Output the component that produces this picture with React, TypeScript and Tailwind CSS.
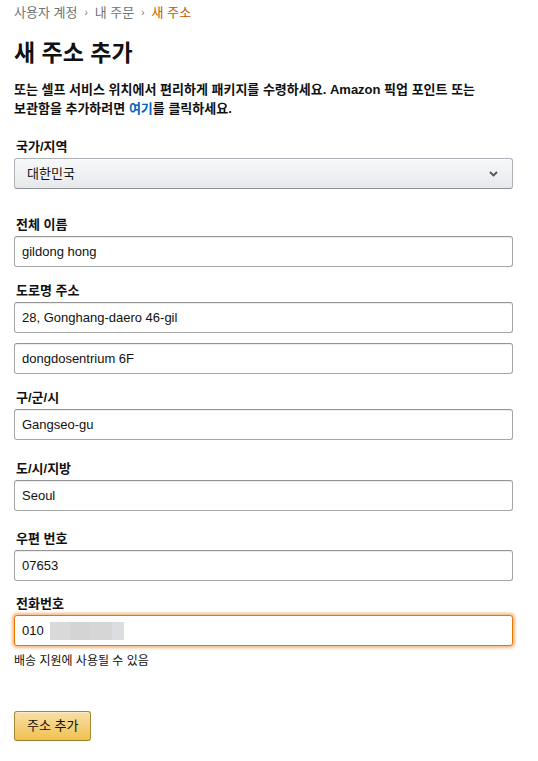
import React from 'react';

const FONT = { fontFamily: '"Liberation Sans", "Noto Sans CJK KR", Arial, sans-serif' };

function Label({ children }: { children: React.ReactNode }) {
  return <div className="text-[13px] leading-[19px] font-bold text-[#111] mb-[2px] pl-[2px]">{children}</div>;
}

function TextInput({ value, className = '' }: { value: string; className?: string }) {
  return (
    <div
      className={`h-[31px] flex items-center px-[7px] text-[13px] text-[#111] bg-white rounded-[3px] border border-[#a6a6a6] border-t-[#949494] shadow-[inset_0_1px_0_rgba(0,0,0,0.07)] ${className}`}
    >
      {value}
    </div>
  );
}

export default function App() {
  return (
    <div className="min-h-[761px] bg-white pl-[14px] pr-[25px]" style={FONT}>
      {/* breadcrumb */}
      <nav className="pt-[3px] text-[13px] leading-[19px] text-[#6f7373] flex items-center gap-[7px]">
        <span>사용자 계정</span>
        <span className="text-[10px] text-[#777]">›</span>
        <span>내 주문</span>
        <span className="text-[10px] text-[#777]">›</span>
        <span className="text-[#c45500]">새 주소</span>
      </nav>

      <h1 className="mt-[17px] text-[23px] leading-[28px] font-bold text-[#111]">새 주소 추가</h1>

      <p className="mt-[13px] text-[13px] leading-[19px] font-bold text-[#111] break-keep">
        또는 셀프 서비스 위치에서 편리하게 패키지를 수령하세요. Amazon 픽업 포인트 또는 보관함을 추가하려면{' '}
        <span className="text-[#0066c0]">여기</span>를 클릭하세요.
      </p>

      <div className="mt-[19px]">
        <Label>국가/지역</Label>
        <div className="h-[31px] flex items-center justify-between pl-[12px] pr-[14px] text-[13px] text-[#111] rounded-[3px] border border-[#adb1b8] border-b-[#8d9096] bg-gradient-to-b from-[#f7f8fa] to-[#e7e9ec] shadow-[0_1px_0_rgba(255,255,255,0.6)_inset]">
          <span>대한민국</span>
          <svg width="9" height="6" viewBox="0 0 9 6" fill="none">
            <path d="M1 1 L4.5 4.5 L8 1" stroke="#555" strokeWidth="1.8" />
          </svg>
        </div>
      </div>

      <div className="mt-[26px]">
        <Label>전체 이름</Label>
        <TextInput value="gildong hong" />
      </div>

      <div className="mt-[14px]">
        <Label>도로명 주소</Label>
        <TextInput value="28, Gonghang-daero 46-gil" />
        <TextInput value="dongdosentrium 6F" className="mt-[10px]" />
      </div>

      <div className="mt-[14px]">
        <Label>구/군/시</Label>
        <TextInput value="Gangseo-gu" />
      </div>

      <div className="mt-[19px]">
        <Label>도/시/지방</Label>
        <TextInput value="Seoul" />
      </div>

      <div className="mt-[18px]">
        <Label>우편 번호</Label>
        <TextInput value="07653" />
      </div>

      <div className="mt-[13px]">
        <Label>전화번호</Label>
        <div className="h-[31px] flex items-center px-[7px] text-[13px] text-[#111] bg-white rounded-[3px] border border-[#e77600] shadow-[0_0_3px_2px_rgba(228,121,17,0.5)]">
          <span>010</span>
          <span className="ml-[6px] h-[18px] w-[74px] flex">
            <span className="flex-1 bg-[#d9d9d9]" />
            <span className="flex-1 bg-[#d4d4d4]" />
            <span className="flex-1 bg-[#d6d6d6]" />
            <span className="w-[12px] bg-[#dcdde0]" />
          </span>
        </div>
        <div className="mt-[7px] text-[12px] leading-[16px] text-[#111]">배송 지원에 사용될 수 있음</div>
      </div>

      <button className="mt-[42px] h-[30px] px-[12px] text-[13px] text-[#111] rounded-[3px] border border-[#a88734] border-b-[#9c7e31] bg-gradient-to-b from-[#f7dfa5] to-[#f0c14b] shadow-[inset_0_1px_0_rgba(255,255,255,0.4)]">
        주소 추가
      </button>
    </div>
  );
}
